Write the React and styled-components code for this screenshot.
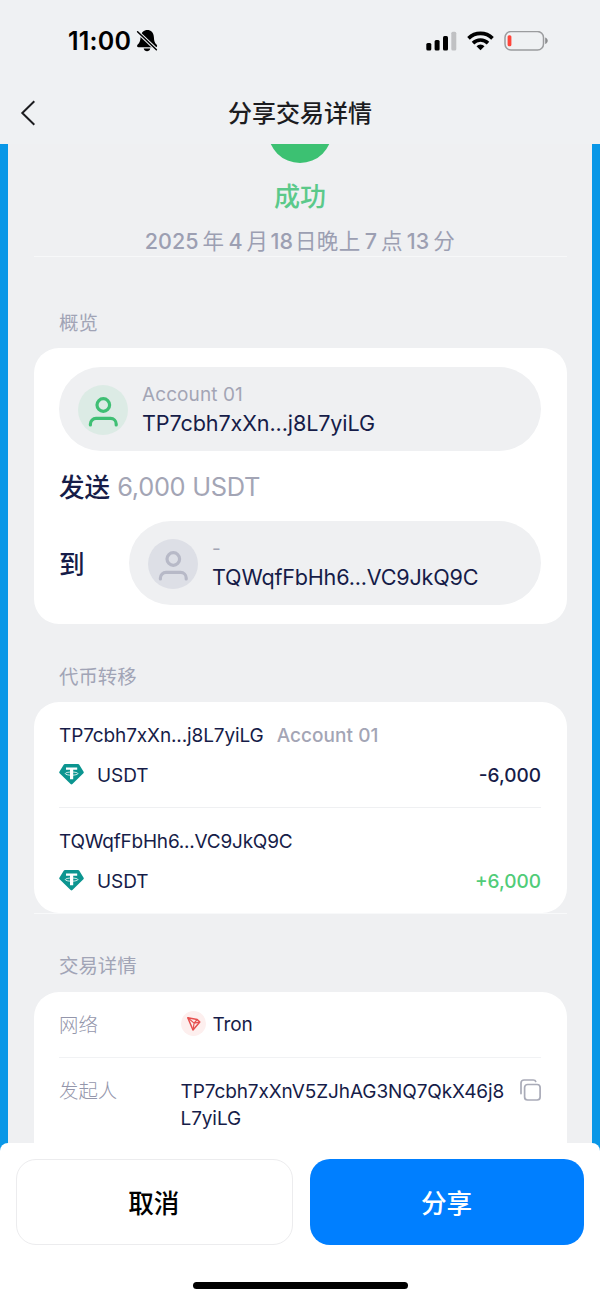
import React from "react";
import styled, { createGlobalStyle } from "styled-components";

const Global = createGlobalStyle`
  * { box-sizing: border-box; }
  body { margin: 0; background: #eff1f3; }
  button { font: inherit; cursor: pointer; }
`;

const ink = "#161c48";
const muted = "#a3a5b5";
const surface = "#eff0f2";

const Screen = styled.div`
  width: 600px;
  height: 1300px;
  display: flex;
  flex-direction: column;
  overflow: hidden;
  background: #0997e7;
  color: ${ink};
  font-family: Inter, "Noto Sans CJK SC", sans-serif;
  font-size: 19px;
`;

const Top = styled.header`
  flex: none;
  height: 144px;
  background: #eff1f3;
`;

const StatusBar = styled.div`
  height: 82px;
  padding: 0 51px 0 68px;
  display: flex;
  align-items: center;
  justify-content: space-between;
  color: #000;
`;

const StatusGroup = styled.div`
  display: flex;
  align-items: center;
  gap: ${(p) => p.$gap}px;
`;

const Clock = styled.span`
  font-size: 25px;
  font-weight: 600;
  letter-spacing: 0.2px;
`;

const NavBar = styled.div`
  height: 61px;
  padding: 0 16px;
  display: grid;
  grid-template-columns: 40px 1fr 40px;
  align-items: center;
`;

const BackButton = styled.button`
  display: flex;
  padding: 0;
  border: 0;
  background: none;
`;

const Title = styled.h1`
  margin: 0;
  padding-top: 2px;
  text-align: center;
  font-size: 24px;
  line-height: 30px;
  font-weight: 500;
  color: #1c1c1f;
`;

const Content = styled.main`
  flex: 1;
  min-height: 0;
  margin: 0 8px;
  padding: 0 25.5px;
  overflow: hidden;
  background: ${surface};
`;

const Summary = styled.section`
  height: 113px;
  display: flex;
  flex-direction: column;
  align-items: center;
  border-bottom: 1px solid #f7f8f9;
`;

const StatusDisc = styled.div`
  flex: none;
  width: 64px;
  height: 64px;
  margin-top: -45px;
  border-radius: 50%;
  background: #3cc172;
`;

const StatusText = styled.div`
  margin-top: 16px;
  font-size: 26px;
  line-height: 36px;
  font-weight: 500;
  color: #5bc98a;
`;

const DateText = styled.div`
  margin-top: 11px;
  font-size: 21.5px;
  line-height: 30px;
  font-weight: 400;
  letter-spacing: 0.4px;
  color: #9c9fb2;
  white-space: nowrap;
`;

const Num = styled.span`
  margin: 0 ${(p) => p.$after ?? 4}px 0 ${(p) => p.$before ?? 4}px;
  font-weight: 450;
  letter-spacing: 0;
`;

const SectionTitle = styled.h2`
  margin: 0;
  padding: ${(p) => p.$top}px 0 0 25.5px;
  height: ${(p) => p.$height}px;
  font-size: 19.4px;
  line-height: 26px;
  font-weight: 400;
  color: #a1a4b6;
`;

const Card = styled.section`
  height: ${(p) => p.$height}px;
  padding: ${(p) => p.$top ?? 0}px 25.5px 0;
  border-radius: 25px;
  background: #fff;
`;

const Pill = styled.div`
  flex: 1;
  height: 84px;
  padding-left: 19px;
  display: flex;
  align-items: center;
  gap: 14px;
  border-radius: 42px;
  background: ${surface};
`;

const Avatar = styled.div`
  width: 50px;
  height: 50px;
  margin-top: 2px;
  display: flex;
  align-items: center;
  justify-content: center;
  border-radius: 50%;
  color: ${(p) => (p.$active ? "#3fbf74" : "#b7b9c7")};
  background: ${(p) => (p.$active ? "#dcebe5" : "#dddfe6")};
`;

const AccountName = styled.div`
  line-height: 26px;
  font-size: 19px;
  font-weight: ${(p) => p.$weight ?? 400};
  letter-spacing: ${(p) => p.$spacing ?? 0.1}px;
  color: ${muted};
`;

const PillText = styled.div`
  padding-top: 3px;
`;

const PillAddress = styled.div`
  line-height: 31px;
  font-size: 21.6px;
  letter-spacing: ${(p) => p.$spacing}px;
`;

const ActionLine = styled.div`
  height: 70px;
  padding-top: 2px;
  display: flex;
  align-items: center;
  gap: 7px;
`;

const Verb = styled.span`
  padding-top: 2px;
  font-size: 25.6px;
  line-height: 36px;
  font-weight: 500;
`;

const Amount = styled.span`
  font-size: 25.4px;
  line-height: 36px;
  letter-spacing: -0.3px;
  color: ${muted};
`;

const Recipient = styled.div`
  display: flex;
  align-items: center;
  justify-content: space-between;
  & > ${Verb} { width: 70px; padding-top: 3px; }
`;

const Transfer = styled.div`
  height: 105px;
  padding-top: 21px;
  & + & { border-top: 1px solid #eff0f2; }
`;

const TransferLine = styled.div`
  height: 40px;
  line-height: 26px;
  display: flex;
  align-items: flex-start;
  gap: 13px;
  & > svg { margin-top: -1px; }
`;

const Text = styled.span`
  font-size: 19px;
  line-height: 26px;
  letter-spacing: ${(p) => p.$spacing ?? 0}px;
`;

const Delta = styled(Text)`
  margin-left: auto;
  font-weight: ${(p) => (p.$positive ? 450 : 500)};
  color: ${(p) => (p.$positive ? "#50cc78" : ink)};
`;

const CardEdge = styled.div`
  height: 1px;
  background: #f8f9fa;
`;

const DetailRow = styled.div`
  height: ${(p) => p.$height}px;
  padding-top: 20px;
  display: grid;
  grid-template-columns: 121.5px 1fr auto;
  align-items: start;
  & + & { border-top: 1px solid #f1f2f4; }
`;

const Label = styled.span`
  font-size: 19.4px;
  line-height: 26px;
  font-weight: 300;
  color: #9496ab;
`;

const Network = styled.div`
  display: flex;
  align-items: flex-start;
  gap: 7px;
`;

const NetworkBadge = styled.span`
  width: 25px;
  height: 25px;
  margin-top: -1px;
  display: flex;
  align-items: center;
  justify-content: center;
  border-radius: 50%;
  background: #fdefee;
`;

const FullAddress = styled.div`
  font-size: 19px;
  line-height: 27px;
  letter-spacing: -0.1px;
  white-space: nowrap;
`;

const Footer = styled.footer`
  flex: none;
  height: 157px;
  padding: 16px 16px 0;
  border-radius: 8px 8px 0 0;
  background: #fff;
`;

const Buttons = styled.div`
  display: grid;
  grid-template-columns: 276.5px 274px;
  gap: 17.5px;
`;

const Button = styled.button`
  height: 86px;
  padding: 0 1px 2px 0;
  border: ${(p) => (p.$primary ? "0" : "1px solid #ececee")};
  border-radius: 20px;
  background: ${(p) => (p.$primary ? "#007fff" : "#fff")};
  color: ${(p) => (p.$primary ? "#fff" : "#000")};
  font-size: 25.6px;
  font-weight: 500;
`;

const HomeIndicator = styled.div`
  width: 215px;
  height: 7px;
  margin: 36.5px 0 0 176.5px;
  border-radius: 4px;
  background: #000;
`;

const BellOff = () => (
  <svg width="22" height="24" viewBox="0 0 22 24">
    <path d="M11.400 1C8 1 5 3.500 4.600 8.200c-.3 3.800-.9 5.400-2.900 7.300-1.100 1.100-.8 2.700.9 2.700h17c1.700 0 2-1.600.9-2.700-2-1.900-2.400-3.500-2.600-7.300C17.600 3.500 14.800 1 11.400 1z" fill="#000" />
    <path d="M7.700 19.500h6.600c-.3 1.700-1.700 2.700-3.300 2.700s-3-1-3.300-2.700z" fill="#000" />
    <path d="M1 2.200l20 19" stroke="#eff1f3" strokeWidth="3.600" />
    <path d="M1.600 2.800l18.800 18" stroke="#000" strokeWidth="1.500" strokeLinecap="round" />
  </svg>
);

const Signal = () => (
  <svg width="31" height="20" viewBox="0 0 31 20">
    <rect x="0.300" y="12" width="5" height="7.500" rx="1.500" />
    <rect x="8.600" y="9" width="5" height="10.500" rx="1.500" />
    <rect x="17" y="5" width="5" height="14.500" rx="1.500" />
    <rect x="25.300" y="0.800" width="5" height="18.700" rx="1.500" fill="#c0c1c3" />
  </svg>
);

const Wifi = () => (
  <svg width="28" height="20" viewBox="0.500 0 28 20" fill="none" stroke="#000">
    <path d="M2 7.300a17.300 17.300 0 0 1 24 0" strokeWidth="3.700" />
    <path d="M6.500 12.100a10.800 10.800 0 0 1 15 0" strokeWidth="3.600" />
    <path d="M14 19.300l-4-4.100a5.800 5.800 0 0 1 8 0z" fill="#000" stroke="none" />
  </svg>
);

const Battery = () => (
  <svg width="45" height="21" viewBox="0 0.500 45 21">
    <rect x="1" y="1" width="38.500" height="18.500" rx="6" fill="none" stroke="#9b9c9e" strokeWidth="1.500" />
    <rect x="3.600" y="4.800" width="3.800" height="11" rx="1.500" fill="#ff453a" />
    <path d="M41.200 7c3.400 1.300 3.400 5.200 0 6.500z" fill="#8b8c8e" />
  </svg>
);

const Person = () => (
  <svg width="32" height="36" viewBox="0 0 32 36" fill="none" stroke="currentColor" strokeWidth="3.200" strokeLinecap="round">
    <circle cx="16.300" cy="13" r="6.300" />
    <path d="M3.400 33V32a5.600 5.600 0 0 1 5.600-5.600h14.600a5.600 5.600 0 0 1 5.600 5.600v1" />
  </svg>
);

const Tether = () => (
  <svg width="25" height="26" viewBox="0 0 25 26">
    <path d="M6 2h13q.9 0 1.300.8l4.300 6.900q.5.800-.2 1.500l-11 10.800q-.9.800-1.800 0L.6 11.200q-.7-.7-.2-1.500l4.300-6.900q.4-.8 1.300-.8z" fill="#0b9590" />
    <path d="M7 5.600h11.200v2.200h-4v9.500h-3.200V7.800H7z" fill="#fff" />
    <ellipse cx="12.600" cy="11.600" rx="6.300" ry="1.600" fill="none" stroke="#fff" strokeWidth="0.800" />
  </svg>
);

const Tron = () => (
  <svg width="17" height="17" viewBox="0 0 17 17" fill="none" stroke="#e6504f" strokeWidth="1.500" strokeLinejoin="round">
    <path d="M2.800 2.800L12.200 4.500 14.800 7.100 8 15z" />
    <path d="M2.800 2.800L9.100 8.100 8 15M9.100 8.100L14.800 7.100M9.100 8.100L12.200 4.500" strokeWidth="1.200" />
  </svg>
);

const Copy = () => (
  <svg width="22" height="23" viewBox="0 0 22 23" fill="none" stroke="#a9abb8" strokeWidth="1.700" strokeLinecap="round">
    <rect x="5.600" y="6.500" width="15.500" height="15.500" rx="3" />
    <path d="M2 15.600V5a3 3 0 0 1 3-3h9.200q2.200 0 2.500 1.500" />
  </svg>
);

export default function App() {
  return (
    <Screen>
      <Global />
      <Top>
        <StatusBar>
          <StatusGroup $gap={5}>
            <Clock>11:00</Clock>
            <BellOff />
          </StatusGroup>
          <StatusGroup $gap={9.5}>
            <Signal />
            <Wifi />
            <Battery />
          </StatusGroup>
        </StatusBar>
        <NavBar>
          <BackButton aria-label="返回">
            <svg width="24" height="28" viewBox="0 0 24 28" fill="none" stroke="#1c1c1f" strokeWidth="2">
              <path d="M18.300 2.300L6.300 14l12 11.700" />
            </svg>
          </BackButton>
          <Title>分享交易详情</Title>
        </NavBar>
      </Top>

      <Content>
        <Summary>
          <StatusDisc />
          <StatusText>成功</StatusText>
          <DateText>
            <Num $before={0}>2025</Num>年<Num>4</Num>月<Num $before={2} $after={2}>18</Num>日晚上<Num>7</Num>点<Num>13</Num>分
          </DateText>
        </Summary>

        <SectionTitle $top={53} $height={91}>概览</SectionTitle>
        <Card $height={276} $top={19}>
          <Pill>
            <Avatar $active><Person /></Avatar>
            <PillText>
              <AccountName>Account 01</AccountName>
              <PillAddress $spacing={-0.12}>TP7cbh7xXn...j8L7yiLG</PillAddress>
            </PillText>
          </Pill>
          <ActionLine>
            <Verb>发送</Verb>
            <Amount>6,000 USDT</Amount>
          </ActionLine>
          <Recipient>
            <Verb>到</Verb>
            <Pill>
              <Avatar><Person /></Avatar>
              <PillText>
                <AccountName>-</AccountName>
                <PillAddress $spacing={-0.2}>TQWqfFbHh6...VC9JkQ9C</PillAddress>
              </PillText>
            </Pill>
          </Recipient>
        </Card>

        <SectionTitle $top={40} $height={78}>代币转移</SectionTitle>
        <Card $height={211}>
          <Transfer>
            <TransferLine>
              <Text $spacing={-0.12}>TP7cbh7xXn...j8L7yiLG</Text>
              <AccountName $weight={450} $spacing={0.05}>Account 01</AccountName>
            </TransferLine>
            <TransferLine>
              <Tether />
              <Text $spacing={-0.1}>USDT</Text>
              <Delta>-6,000</Delta>
            </TransferLine>
          </Transfer>
          <Transfer>
            <TransferLine>
              <Text $spacing={-0.22}>TQWqfFbHh6...VC9JkQ9C</Text>
            </TransferLine>
            <TransferLine>
              <Tether />
              <Text $spacing={-0.1}>USDT</Text>
              <Delta $positive>+6,000</Delta>
            </TransferLine>
          </Transfer>
        </Card>
        <CardEdge />

        <SectionTitle $top={39} $height={78}>交易详情</SectionTitle>
        <Card $height={240}>
          <DetailRow $height={65}>
            <Label>网络</Label>
            <Network>
              <NetworkBadge><Tron /></NetworkBadge>
              <Text $spacing={-0.1}>Tron</Text>
            </Network>
          </DetailRow>
          <DetailRow $height={120}>
            <Label>发起人</Label>
            <FullAddress>
              TP7cbh7xXnV5ZJhAG3NQ7QkX46j8
              <br />
              L7yiLG
            </FullAddress>
            <Copy />
          </DetailRow>
        </Card>
      </Content>

      <Footer>
        <Buttons>
          <Button>取消</Button>
          <Button $primary>分享</Button>
        </Buttons>
        <HomeIndicator />
      </Footer>
    </Screen>
  );
}
